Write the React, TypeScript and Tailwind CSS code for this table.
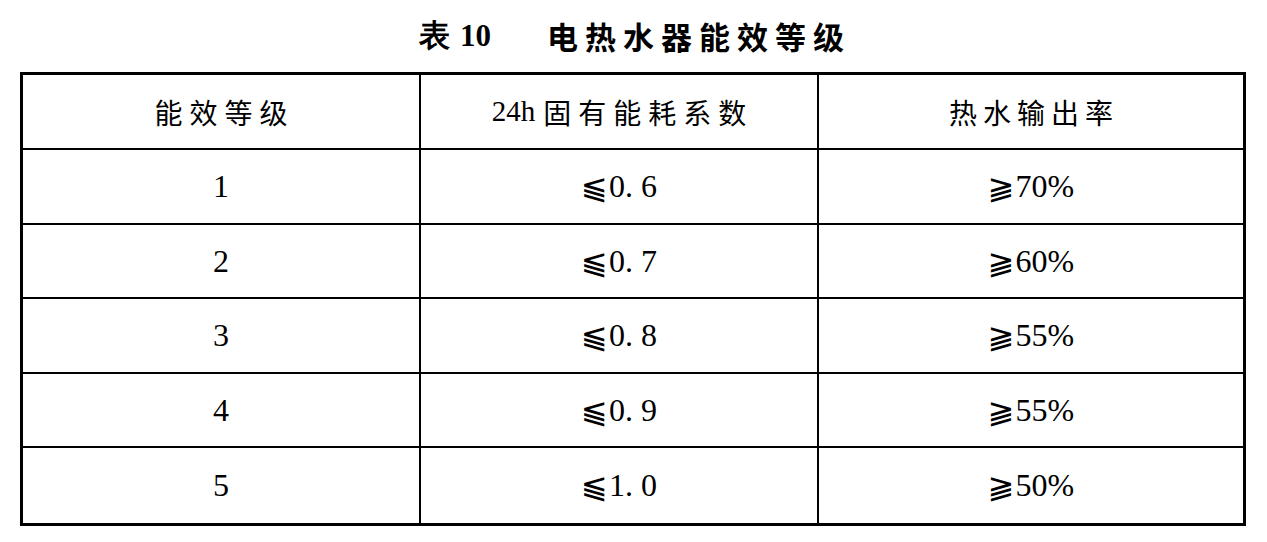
const ROWS = [
  ["1", "0. 6", "70%"],
  ["2", "0. 7", "60%"],
  ["3", "0. 8", "55%"],
  ["4", "0. 9", "55%"],
  ["5", "1. 0", "50%"],
];

const serif = "font-['Liberation_Serif','Noto_Sans_CJK_SC',serif]";
const cjk = "font-['Noto_Sans_CJK_SC',sans-serif]";

function Cell({
  children,
  last,
  bottom,
  head,
}: {
  children: React.ReactNode;
  last?: boolean;
  bottom?: boolean;
  head?: boolean;
}) {
  return (
    <div
      className={
        "flex items-center justify-center border-black " +
        (head ? "h-[75px] " : "h-[74.5px] ") +
        (last ? "" : "border-r-2 ") +
        (bottom ? "" : "border-b-2")
      }
    >
      {children}
    </div>
  );
}

function Sym({ c }: { c: string }) {
  return <span className="mr-[1px] font-['DejaVu_Sans',serif] text-[32px] leading-none">{c}</span>;
}

export default function App() {
  return (
    <div className="min-h-screen bg-white text-black">
      <div className="flex h-[72px] items-center justify-center pr-[4px]">
        <span className="font-['Liberation_Serif',serif] text-[31px] font-bold">表</span>
        <span className="ml-[10px] font-['Liberation_Serif',serif] text-[31px] font-bold">10</span>
        <span className={cjk + " ml-[56px] mr-[-7px] text-[31px] font-bold tracking-[7px]"}>电热水器能效等级</span>
      </div>

      <div className="ml-[20px] w-[1226px] border-[3px] border-black">
        <div className="grid grid-cols-[398px_398px_1fr]">
          <Cell head>
            <span className={cjk + " mr-[-7px] text-[28px] tracking-[7px]"}>能效等级</span>
          </Cell>
          <Cell head>
            <span className={serif + " text-[29px]"}>24h</span>
            <span className={cjk + " ml-[8px] mr-[-7px] text-[28px] tracking-[7px]"}>固有能耗系数</span>
          </Cell>
          <Cell head last>
            <span className={cjk + " mr-[-6px] text-[28px] tracking-[6px]"}>热水输出率</span>
          </Cell>
          {ROWS.map((r, i) => {
            const bottom = i === ROWS.length - 1;
            return [
              <Cell key={r[0] + "a"} bottom={bottom}>
                <span className={serif + " text-[32px]"}>{r[0]}</span>
              </Cell>,
              <Cell key={r[0] + "b"} bottom={bottom}>
                <Sym c="⫹" />
                <span className={serif + " whitespace-pre text-[32px]"}>{r[1]}</span>
              </Cell>,
              <Cell key={r[0] + "c"} bottom={bottom} last>
                <Sym c="⫺" />
                <span className={serif + " text-[32px]"}>{r[2]}</span>
              </Cell>,
            ];
          })}
        </div>
      </div>
    </div>
  );
}
